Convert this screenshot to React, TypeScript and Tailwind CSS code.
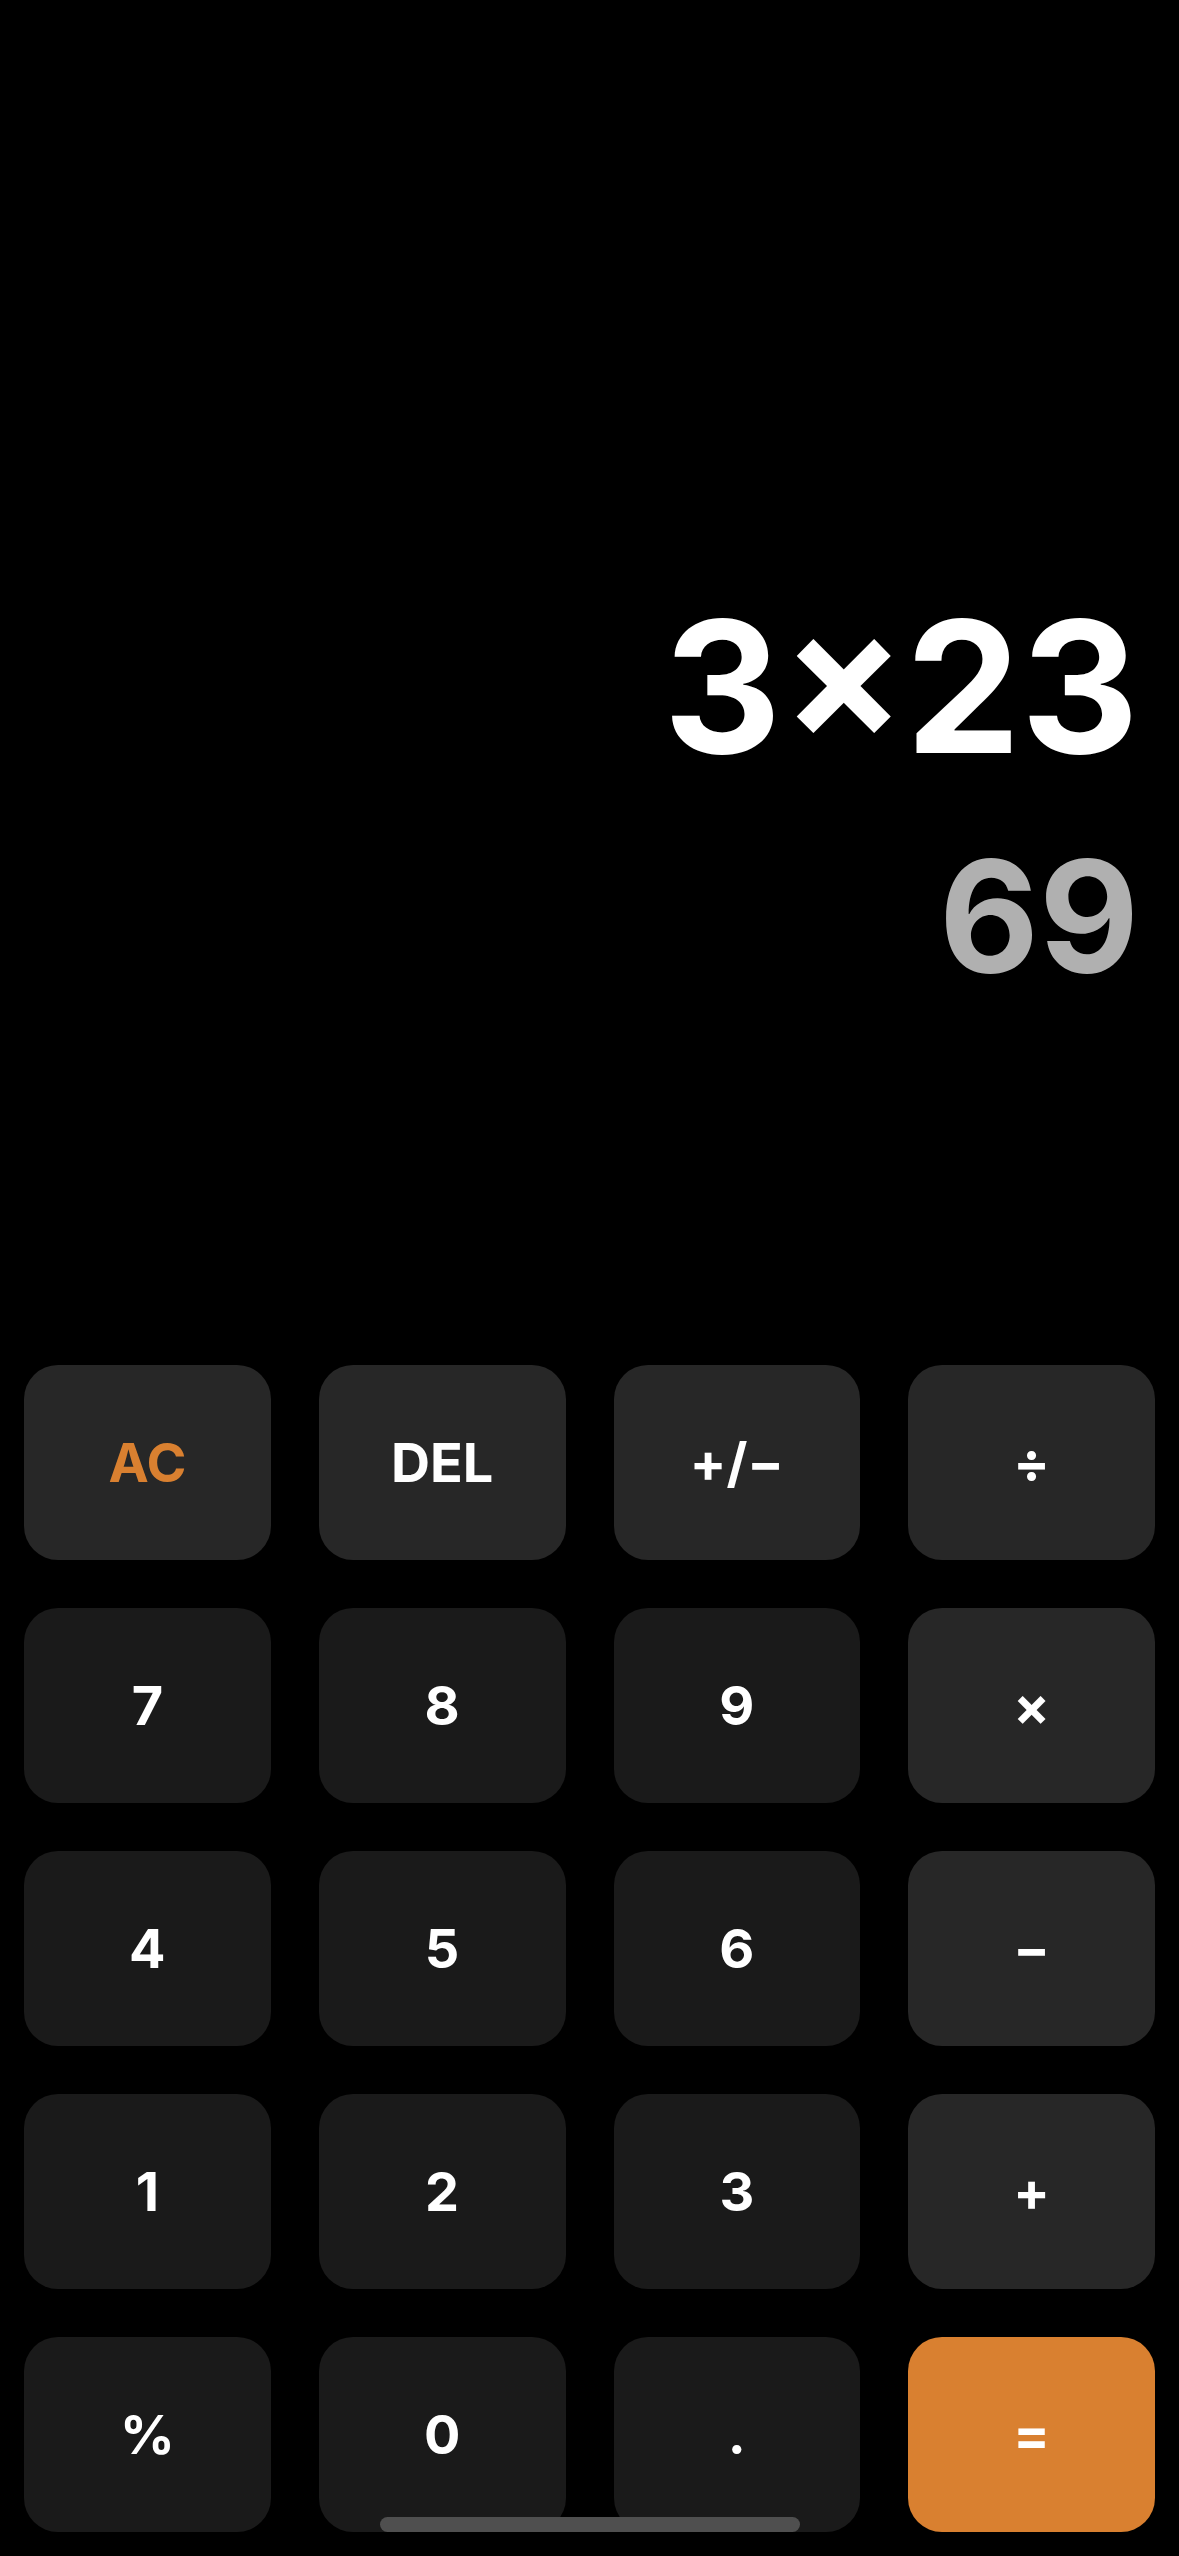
import React from 'react';

type Key = { label: string; kind: 'fn' | 'num' | 'op' | 'eq' | 'clear' };

const keys: Key[] = [
  { label: 'AC', kind: 'clear' },
  { label: 'DEL', kind: 'fn' },
  { label: '+/\u2212', kind: 'fn' },
  { label: '\u00f7', kind: 'op' },
  { label: '7', kind: 'num' },
  { label: '8', kind: 'num' },
  { label: '9', kind: 'num' },
  { label: '\u00d7', kind: 'op' },
  { label: '4', kind: 'num' },
  { label: '5', kind: 'num' },
  { label: '6', kind: 'num' },
  { label: '\u2212', kind: 'op' },
  { label: '1', kind: 'num' },
  { label: '2', kind: 'num' },
  { label: '3', kind: 'num' },
  { label: '+', kind: 'op' },
  { label: '%', kind: 'num' },
  { label: '0', kind: 'num' },
  { label: '.', kind: 'num' },
  { label: '=', kind: 'eq' },
];

function keyClass(kind: Key['kind']) {
  if (kind === 'num') return 'bg-[#1a1a1a] text-white';
  if (kind === 'eq') return 'bg-[#d98030] text-white';
  if (kind === 'clear') return 'bg-[#272727] text-[#d98030]';
  return 'bg-[#272727] text-white';
}

export default function App() {
  return (
    <div
      className="relative w-[1179px] h-[2556px] bg-black flex flex-col overflow-hidden"
      style={{ fontFamily: 'Inter, "Liberation Sans", sans-serif' }}
    >
      {/* display */}
      <div className="h-[1365px] flex flex-col items-end pt-[595px] pr-10">
        <div className="text-[183px] leading-none font-bold text-white">3×23</div>
        <div className="mt-[61px] text-[154px] leading-none font-bold text-[#b0b0b0]">69</div>
      </div>

      {/* keypad */}
      <div className="grid grid-cols-4 gap-12 px-6 pb-6">
        {keys.map((k) => (
          <button
            key={k.label}
            className={`h-[195px] rounded-[34px] flex items-center justify-center text-[54px] leading-none font-bold ${keyClass(k.kind)}`}
          >
            {k.label}
          </button>
        ))}
      </div>

      <div className="absolute left-1/2 -translate-x-1/2 bottom-6 w-[420px] h-[15px] rounded-full bg-[#4f4f4f]" />
    </div>
  );
}
